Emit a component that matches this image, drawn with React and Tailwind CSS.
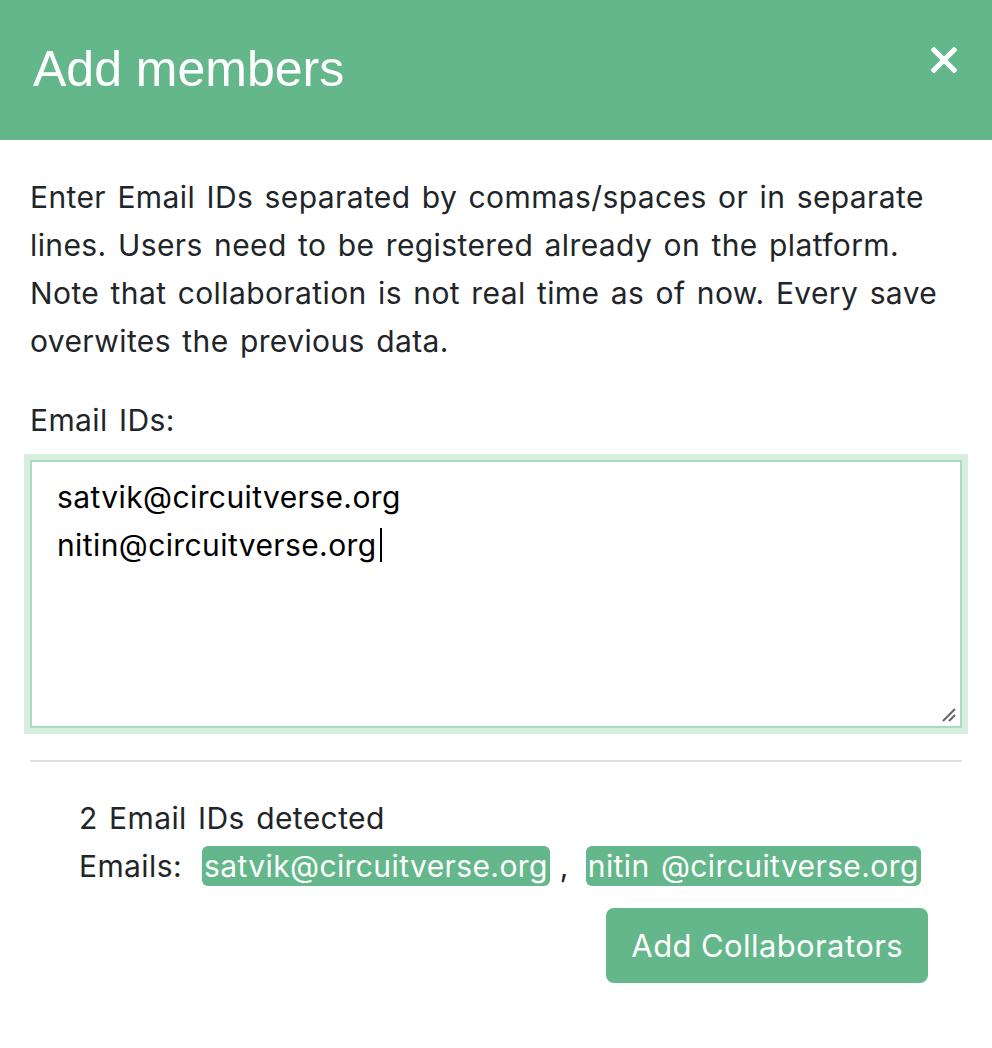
import React from "react";

const emails = ["satvik@circuitverse.org", "nitin @circuitverse.org"];

const CloseIcon = () => (
  <svg width="26" height="26" viewBox="0 0 26 26" fill="none">
    <path d="M3 3L23 23M23 3L3 23" stroke="white" strokeWidth="5" strokeLinecap="square" />
  </svg>
);

const App = () => {
  return (
    <div className="w-[992px] h-[1048px] bg-white font-['Inter',sans-serif] text-[#212529] tracking-[0.4px] [word-spacing:2.5px]">
      <div className="h-[140px] bg-[#63b78a] flex items-center justify-between pl-[33px] pr-[35px] pb-[2px] tracking-normal [word-spacing:normal]">
        <h1 className="text-[50px] leading-none text-white font-['Liberation_Sans',Arial,sans-serif] font-normal">
          Add members
        </h1>
        <button className="mb-[18px]">
          <CloseIcon />
        </button>
      </div>

      <div className="px-[30px] pt-[33px]">
        <p className="text-[30px] leading-[48px]">
          Enter Email IDs separated by commas/spaces or in separate lines. Users need to be registered already on the
          platform. Note that collaboration is not real time as of now. Every save overwites the previous data.
        </p>

        <label className="block mt-[31px] text-[30px] leading-[48px]">Email IDs:</label>

        <div className="mt-[16px] relative h-[268px] border-2 border-[#a9dcc0] shadow-[0_0_0_6px_#d6ede0] bg-white pl-[25px] pt-[11px] text-[30px] leading-[48px] text-black">
          <div>satvik@circuitverse.org</div>
          <div className="flex items-center">
            nitin@circuitverse.org
            <span className="inline-block w-[2px] h-[34px] bg-black ml-[3px]" />
          </div>
          <svg className="absolute right-[3px] bottom-[3px]" width="16" height="16" viewBox="0 0 16 16">
            <path d="M2 14L14 2M8 14L14 8" stroke="#666" strokeWidth="2" />
          </svg>
        </div>

        <div className="mt-[32px] h-[2px] bg-[#dee2e6]" />

        <div className="pl-[49px] pr-[34px] pt-[32px] text-[30px] leading-[48px]">
          <div>2 Email IDs detected</div>
          <div className="flex items-center">
            <span>Emails:</span>
            <span className="ml-[20px] bg-[#63b78a] text-white rounded-[6px] px-[2px] leading-[40px]">
              {emails[0]}
            </span>
            <span className="ml-[10px] mr-[17px]">,</span>
            <span className="bg-[#63b78a] text-white rounded-[6px] px-[2px] leading-[40px]">{emails[1]}</span>
          </div>
          <div className="flex justify-end mt-[18px]">
            <button className="h-[75px] px-[25px] bg-[#63b78a] text-white rounded-[8px] text-[31px]">
              Add Collaborators
            </button>
          </div>
        </div>
      </div>
    </div>
  );
};

export default App;
